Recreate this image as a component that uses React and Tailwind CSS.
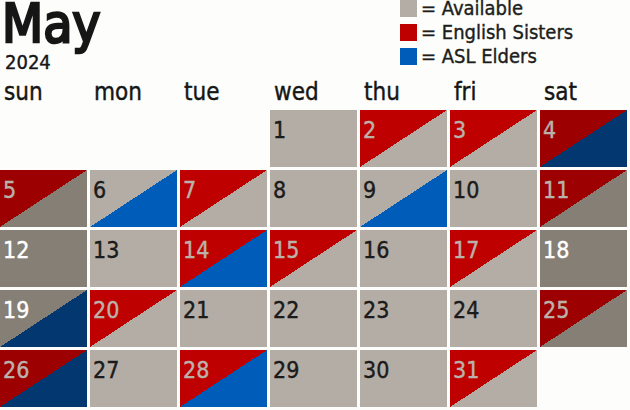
const font = "font-['DejaVu_Sans_Condensed','DejaVu_Sans',sans-serif] font-stretch-condensed";

// cell fill by status: top-left triangle / bottom-right triangle
const cellStyles = {
  avail: "bg-[#b4ada5] text-[#1b1b1b]",
  weekend: "bg-[#857f76] text-white",
  redAvail: "bg-[linear-gradient(to_bottom_right,#bf0000_50%,#b4ada5_50%)] text-[#bab2aa]",
  redBlue: "bg-[linear-gradient(to_bottom_right,#bf0000_50%,#005cb9_50%)] text-[#bab2aa]",
  availBlue: "bg-[linear-gradient(to_bottom_right,#b4ada5_50%,#005cb9_50%)] text-[#1b1b1b]",
  dRedGray: "bg-[linear-gradient(to_bottom_right,#9c0000_50%,#857f76_50%)] text-[#bab2aa]",
  dRedBlue: "bg-[linear-gradient(to_bottom_right,#9c0000_50%,#03376f_50%)] text-[#bab2aa]",
  dGrayBlue: "bg-[linear-gradient(to_bottom_right,#857f76_50%,#03376f_50%)] text-white",
};

const days = [
  null, null, null,
  [1, "avail"], [2, "redAvail"], [3, "redAvail"], [4, "dRedBlue"],
  [5, "dRedGray"], [6, "availBlue"], [7, "redAvail"], [8, "avail"], [9, "availBlue"], [10, "avail"], [11, "dRedGray"],
  [12, "weekend"], [13, "avail"], [14, "redBlue"], [15, "redAvail"], [16, "avail"], [17, "redAvail"], [18, "weekend"],
  [19, "dGrayBlue"], [20, "redAvail"], [21, "avail"], [22, "avail"], [23, "avail"], [24, "avail"], [25, "dRedGray"],
  [26, "dRedBlue"], [27, "avail"], [28, "redBlue"], [29, "avail"], [30, "avail"], [31, "redAvail"], null,
];

const legend = [
  { color: "bg-[#b4ada5]", label: "= Available" },
  { color: "bg-[#bf0000]", label: "= English Sisters" },
  { color: "bg-[#005cb9]", label: "= ASL Elders" },
];

export default function App() {
  return (
    <div className={`w-[630px] h-[410px] overflow-hidden bg-[#fdfefb] text-[#161616] ${font} [-webkit-text-stroke:0.4px_currentColor]`}>
      {/* title + legend */}
      <div className="flex h-[80px]">
        <div className="w-[400px] pl-[2px]">
          <div className="text-[53px] leading-none h-[56px] mt-[-3px] [-webkit-text-stroke:2.5px_#161616]">May</div>
          <div className="text-[20px] leading-none pl-[3px] mt-[-1px]">2024</div>
        </div>
        <div className="flex flex-col">
          {legend.map((item) => (
            <div key={item.label} className="flex items-start h-6 gap-[4px]">
              <div className={`w-[17px] h-[17px] ${item.color}`} />
              <span className="text-[20px] leading-none mt-[-2px] text-[#1e1e1e]">{item.label}</span>
            </div>
          ))}
        </div>
      </div>

      {/* weekday names */}
      <div className="grid grid-cols-[repeat(7,87px)] gap-x-[3px] h-[30px]">
        {["sun", "mon", "tue", "wed", "thu", "fri", "sat"].map((d) => (
          <div key={d} className="text-[24px] leading-none pl-[4px]">{d}</div>
        ))}
      </div>

      {/* calendar grid */}
      <div className="grid grid-cols-[repeat(7,87px)] auto-rows-[57px] gap-[3px]">
        {days.map((d, i) =>
          d ? (
            <div key={i} className={`${cellStyles[d[1]]} text-[23px] leading-none pt-[9px] pl-[3px]`}>
              {d[0]}
            </div>
          ) : (
            <div key={i} />
          )
        )}
      </div>
    </div>
  );
}
